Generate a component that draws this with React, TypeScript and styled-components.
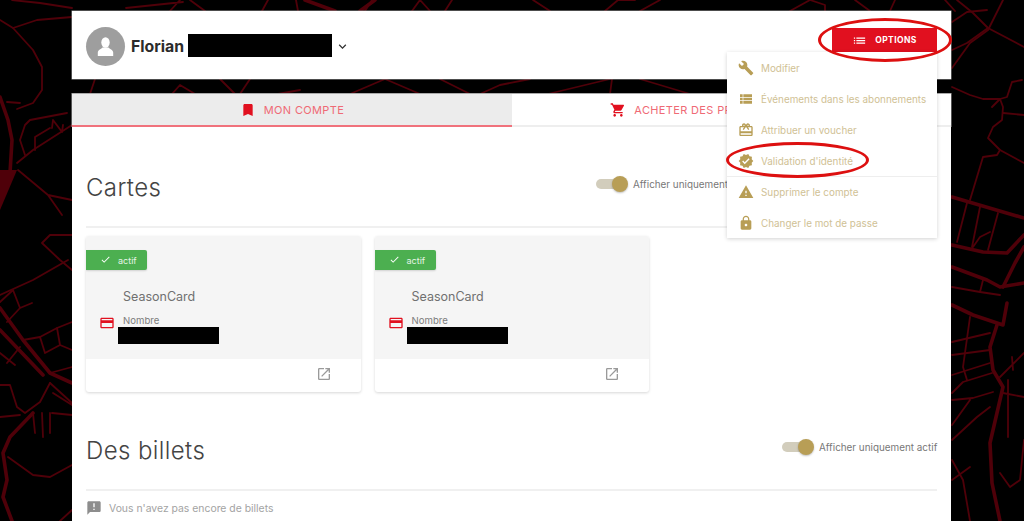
import React from 'react';
import styled, { createGlobalStyle } from 'styled-components';
import {
  MdBookmark,
  MdShoppingCart,
  MdBuild,
  MdViewList,
  MdRedeem,
  MdVerified,
  MdWarning,
  MdLock,
  MdCreditCard,
  MdOpenInNew,
  MdAnnouncement,
  MdCheck,
  MdKeyboardArrowDown,
  MdList,
} from 'react-icons/md';

const GlobalStyle = createGlobalStyle`
  html, body {
    margin: 0;
    height: 100%;
    background: #000;
    overflow: hidden;
  }
  body {
    font-family: Inter, "Noto Sans", "Liberation Sans", sans-serif;
  }
`;

const Screen = styled.div`
  position: relative;
  height: 521px;
  overflow: hidden;
  background: #000;
`;

const MapLines = styled.svg`
  position: absolute;
  inset: 0;
  fill: none;
  stroke: #4f0009;
  stroke-linejoin: round;
  stroke-linecap: round;
`;

const Page = styled.div`
  position: relative;
  padding: 11px 73px 0 72px;
`;

const Header = styled.header`
  height: 68px;
  background: #fff;
  display: flex;
  align-items: center;
  justify-content: space-between;
  padding: 0 14px;
  margin-bottom: 15px;
  box-shadow: 0 0 0 0.5px #999;
`;

const User = styled.div`
  display: flex;
  align-items: center;
`;

const Avatar = styled.div`
  width: 39px;
  height: 39px;
  border-radius: 50%;
  background: #9e9e9e;
  display: flex;
  align-items: center;
  justify-content: center;
  margin: 2px 6px 0 0;
`;

const UserName = styled.span`
  font-size: 15.8px;
  font-weight: 700;
  color: #2b2b2b;
  width: 57px;
  margin-top: 2px;
`;

const Redacted = styled.div<{ $w: number; $h: number }>`
  width: ${(p) => p.$w}px;
  height: ${(p) => p.$h}px;
  background: #000;
`;

const Chevron = styled(MdKeyboardArrowDown)`
  font-size: 15px;
  color: #333;
  margin: 2px 0 0 3px;
`;

const OptionsButton = styled.button`
  width: 105px;
  height: 24px;
  border: 0;
  background: #e1101f;
  color: #fff;
  font: 700 8.5px Inter, sans-serif;
  letter-spacing: 0.4px;
  display: flex;
  align-items: center;
  justify-content: center;
  gap: 8px;
  padding: 0;
  margin-bottom: 10px;
  svg {
    font-size: 15px;
  }
`;

const Tabs = styled.div`
  display: grid;
  grid-template-columns: 440px 1fr;
  background: #fff;
  box-shadow: 0 -0.5px 0 0.5px #aaa;
`;

const Tab = styled.div<{ $active?: boolean }>`
  height: 33px;
  box-sizing: border-box;
  display: flex;
  align-items: center;
  justify-content: center;
  gap: 8px;
  background: ${(p) => (p.$active ? '#ececec' : '#fff')};
  border-bottom: 2px solid ${(p) => (p.$active ? '#f0727c' : '#eeeeee')};
  color: #ef6a75;
  font-size: 11px;
  letter-spacing: 0.35px;
  svg {
    font-size: 16px;
    color: #e1101f;
  }
`;

const Content = styled.main`
  background: #fff;
  padding: 0 14px;
  height: 400px;
`;

const SectionHead = styled.div<{ $top: number; $right?: number }>`
  display: flex;
  align-items: center;
  justify-content: space-between;
  padding: ${(p) => p.$top}px ${(p) => p.$right ?? 0}px 21px 0;
  border-bottom: 2px solid #f0f0f0;
  height: 34px;
`;

const SectionTitle = styled.h2`
  margin: 0;
  font-size: 24px;
  line-height: 34px;
  font-weight: 300;
  color: #444;
  letter-spacing: 0.4px;
`;

const ToggleWrap = styled.div`
  display: flex;
  align-items: center;
  gap: 5px;
  width: 155px;
  margin-bottom: 9px;
  white-space: nowrap;
  font-size: 9.9px;
  color: #777;
`;

const Toggle = styled.div`
  position: relative;
  width: 32px;
  height: 10px;
  flex-shrink: 0;
  &::before {
    content: '';
    position: absolute;
    inset: 0 1px 0 0;
    border-radius: 5px;
    background: #d2cdbc;
  }
  &::after {
    content: '';
    position: absolute;
    right: 0;
    top: -3px;
    width: 16px;
    height: 16px;
    border-radius: 50%;
    background: #b89e56;
    box-shadow: 0 1px 2px rgba(0, 0, 0, 0.25);
  }
`;

const CardRow = styled.div`
  display: flex;
  gap: 14px;
  margin-top: 8px;
`;

const Card = styled.article`
  width: 274.5px;
  border-radius: 3px;
  overflow: hidden;
  background: #fff;
  box-shadow: 0 1px 3px rgba(0, 0, 0, 0.16);
`;

const CardBody = styled.div`
  height: 123px;
  box-sizing: border-box;
  background: #f5f5f5;
  padding-top: 14px;
`;

const Badge = styled.div`
  width: 61px;
  height: 20px;
  background: #4caf50;
  border-radius: 0 2px 2px 0;
  color: #e6f4e6;
  font-size: 9px;
  display: flex;
  align-items: center;
  gap: 7px;
  padding-left: 14px;
  box-sizing: border-box;
  box-shadow: 0 1px 2px rgba(0, 0, 0, 0.15);
  svg {
    font-size: 11px;
    color: #fff;
    margin-top: -2px;
  }
`;

const CardTitle = styled.div`
  margin: 19px 0 0 37px;
  font-size: 12.5px;
  line-height: 16px;
  color: #707070;
`;

const NumberRow = styled.div`
  display: flex;
  margin: 10px 0 0 14px;
`;

const CardIcon = styled(MdCreditCard)`
  font-size: 16px;
  color: #e1101f;
  margin: 0 8px 0 -1px;
`;

const NumberCol = styled.div`
  display: flex;
  flex-direction: column;
  font-size: 9.6px;
  line-height: 12px;
  color: #7c7c7c;
  ${Redacted} {
    margin-left: -5px;
  }
`;

const CardFoot = styled.div`
  height: 33px;
  display: flex;
  align-items: center;
  justify-content: flex-end;
  padding-right: 29px;
  svg {
    font-size: 16px;
    color: #9a9a9a;
    margin-top: -3px;
  }
`;

const Empty = styled.div`
  display: flex;
  align-items: center;
  gap: 7px;
  margin-top: 9px;
  font-size: 10.4px;
  color: #a3a3a3;
  svg {
    font-size: 16px;
    color: #8d8d8d;
  }
`;

const Menu = styled.nav`
  position: absolute;
  left: 727px;
  top: 52px;
  width: 210px;
  height: 186px;
  background: #fff;
  box-shadow: 0 1px 4px rgba(0, 0, 0, 0.18);
`;

const MenuItem = styled.div<{ $divided?: boolean }>`
  height: 31px;
  display: flex;
  align-items: center;
  gap: 7px;
  padding-left: 11px;
  box-sizing: border-box;
  font-size: 9.9px;
  white-space: nowrap;
  color: #d0c195;
  border-top: ${(p) => (p.$divided ? '1px solid #eeeeee' : 'none')};
  svg {
    font-size: 16px;
    color: #b89e56;
    flex-shrink: 0;
  }
`;

const OptionsCircle = styled.div`
  position: absolute;
  left: 818px;
  top: 18px;
  width: 134px;
  height: 44px;
  box-sizing: border-box;
  border: 3px solid #dd1010;
  border-radius: 50%;
`;

const ValidationCircle = styled.div`
  position: absolute;
  left: 726px;
  top: 142px;
  width: 143px;
  height: 36px;
  box-sizing: border-box;
  border: 3px solid #dd1010;
  border-radius: 50%;
`;

const thinRoads = [
  'M0 20 13 28 37 20 72 17',
  'M12 0 40 3 72 8',
  'M13 28 33 50 42 67 42 90 33 103 17 109',
  'M7 102 20 103',
  'M17 163 33 150 72 125',
  'M25 155 20 140 25 125 30 120 67 113',
  'M35 150 35 137 50 128 M52 128 53 120 62 132 63 125',
  'M18 170 48 195 72 200 M48 195 62 215',
  'M72 235 50 235 42 243 60 260 72 270',
  'M68 260 33 280 0 295',
  'M0 302 13 290 20 308 7 322 M20 308 32 303',
  'M23 340 40 337 57 328 72 322 M40 337 45 353 M57 328 60 345 72 350 M45 353 60 345',
  'M0 353 15 365 M20 347 7 363',
  'M50 373 72 367 M50 383 72 403 M53 393 72 405',
  'M0 385 10 385 17 407 25 413 40 402 50 383',
  'M0 417 20 415',
  'M8 457 33 475 50 477 72 465',
  'M33 413 35 433 M42 413 43 437 M50 413 50 433 M52 413 72 415',
  'M60 521 72 510',
  'M126 8 183 2 M170 11 180 0 M190 0 205 11 M262 11 268 0 M296 0 298 11 M365 11 372 0 M412 11 420 0 430 11 M445 11 452 0',
  'M533 0 550 11 M605 11 618 0 635 0 M640 11 660 0 M790 11 810 0 825 5 825 11 M855 0 870 11 M895 0 890 11 M945 0 955 11',
  'M90 94 95 79 M172 94 180 85 195 94 M220 79 235 94 M240 94 250 79 M278 94 300 90 M350 94 385 79 M385 79 420 94 M440 79 470 94 M480 94 500 85 530 79 M548 94 610 79',
  'M610 94 612 79 M640 79 690 94',
  'M957 0 973 13 988 28 1024 47',
  'M1003 0 988 30 970 43 952 68',
  'M952 50 967 43 988 28',
  'M952 22 967 12 987 10',
  'M952 87 970 95 983 99 1000 99 1007 97 1012 82 1022 80',
  'M1000 99 1003 107 1002 120 993 127 988 138 1000 150 1024 163',
  'M1003 113 1024 115 M992 107 1000 99',
  'M1000 150 997 155 983 157 970 200',
  'M957 242 967 203 M972 247 980 207 M988 250 998 213 M973 247 980 237 990 232',
  'M952 287 980 292 1000 295 M983 280 980 292',
  'M970 317 963 367 967 380',
  'M952 342 990 333 M952 355 990 350 M952 375 990 363',
  'M952 393 963 382 992 373',
  'M1000 377 1024 353 M1012 357 1013 370',
  'M1008 380 1008 437 M1003 393 1024 397',
  'M952 400 973 398 993 392 M952 425 970 400 M952 440 977 417 990 407',
  'M952 460 963 480 970 521 M952 480 970 467',
  'M1000 473 1010 487 1020 480 1024 440',
];

const thickRoads = [
  'M0 97 8 120 12 140 10 173',
  'M0 308 23 340 50 373 72 383',
  'M0 330 43 375',
  'M33 413 10 437 3 453 7 480 3 497 12 521',
  'M952 197 1024 218',
  'M952 245 983 252 1007 253 1024 235',
  'M952 267 987 280 1000 287 1024 283',
  'M1003 287 1015 263 1024 247',
  'M952 305 973 315 1003 325 1007 303',
  'M997 325 990 347 993 370 1003 387 990 443 992 483 1000 521',
  'M305 0 335 11 M375 0 360 11',
];

// white silhouette on the grey avatar circle
const PersonIcon = () => (
  <svg width="17" height="19" viewBox="0 0 17 19" fill="#fff">
    <ellipse cx="8.5" cy="5.5" rx="4.2" ry="5.2" />
    <path d="M5.5 10.5 C4.5 12 1 12.5 0.8 15.5 L0.8 19 H16.2 V15.5 C16 12.5 12.5 12 11.5 10.5 Z" />
  </svg>
);

const menuItems = [
  { icon: <MdBuild />, label: 'Modifier' },
  { icon: <MdViewList />, label: 'Événements dans les abonnements' },
  { icon: <MdRedeem />, label: 'Attribuer un voucher' },
  { icon: <MdVerified />, label: "Validation d'identité" },
  { icon: <MdWarning />, label: 'Supprimer le compte', divided: true },
  { icon: <MdLock />, label: 'Changer le mot de passe' },
];

const SeasonCard = () => (
  <Card>
    <CardBody>
      <Badge>
        <MdCheck />
        actif
      </Badge>
      <CardTitle>SeasonCard</CardTitle>
      <NumberRow>
        <CardIcon />
        <NumberCol>
          Nombre
          <Redacted $w={101} $h={17} />
        </NumberCol>
      </NumberRow>
    </CardBody>
    <CardFoot>
      <MdOpenInNew />
    </CardFoot>
  </Card>
);

const ActiveToggle = () => (
  <ToggleWrap>
    <Toggle />
    Afficher uniquement actif
  </ToggleWrap>
);

export default function App() {
  return (
    <Screen>
      <GlobalStyle />
      <MapLines width="1024" height="521" viewBox="0 0 1024 521">
        {thinRoads.map((d) => (
          <path key={d} d={d} strokeWidth="1.8" />
        ))}
        {thickRoads.map((d) => (
          <path key={d} d={d} strokeWidth="3.6" />
        ))}
        <path d="M0 170 17 170 0 210Z" fill="#4f0009" stroke="none" />
      </MapLines>
      <Page>
        <Header>
          <User>
            <Avatar>
              <PersonIcon />
            </Avatar>
            <UserName>Florian</UserName>
            <Redacted $w={144} $h={23} />
            <Chevron />
          </User>
          <OptionsButton>
            <MdList />
            OPTIONS
          </OptionsButton>
        </Header>
        <Tabs>
          <Tab $active>
            <MdBookmark />
            MON COMPTE
          </Tab>
          <Tab>
            <MdShoppingCart />
            ACHETER DES PRODUITS ET SERVICES
          </Tab>
        </Tabs>
        <Content>
          <SectionHead $top={44} $right={186}>
            <SectionTitle>Cartes</SectionTitle>
            <ActiveToggle />
          </SectionHead>
          <CardRow>
            <SeasonCard />
            <SeasonCard />
          </CardRow>
          <SectionHead $top={42}>
            <SectionTitle>Des billets</SectionTitle>
            <ActiveToggle />
          </SectionHead>
          <Empty>
            <MdAnnouncement />
            Vous n'avez pas encore de billets
          </Empty>
        </Content>
      </Page>
      <Menu>
        {menuItems.map((item) => (
          <MenuItem key={item.label} $divided={item.divided}>
            {item.icon}
            {item.label}
          </MenuItem>
        ))}
      </Menu>
      <OptionsCircle />
      <ValidationCircle />
    </Screen>
  );
}
